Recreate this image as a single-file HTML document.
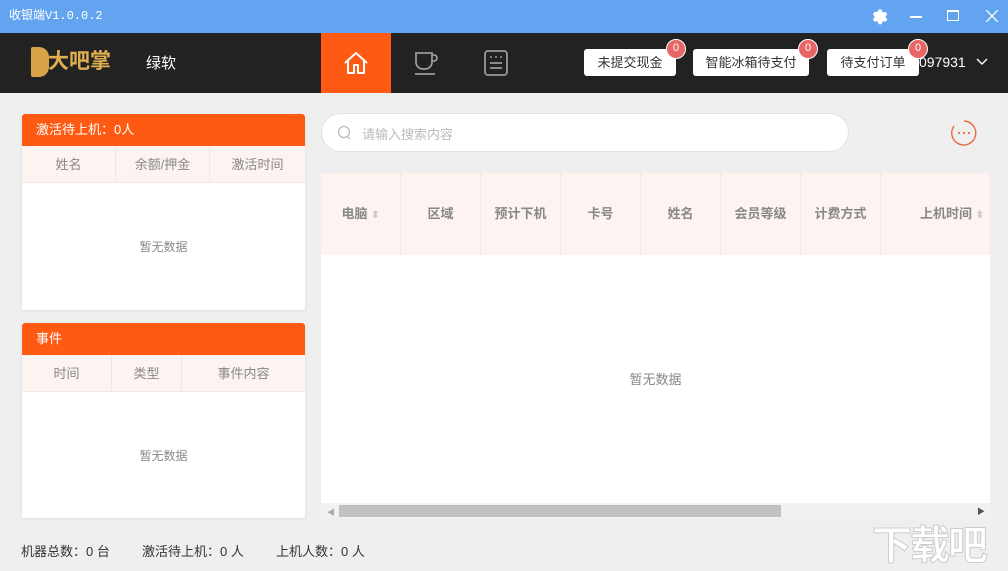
<!DOCTYPE html>
<html><head><meta charset="utf-8"><style>
*{margin:0;padding:0;box-sizing:border-box}
body{width:1008px;height:567px;overflow:hidden;background:#efefef;font-family:"Liberation Sans","Noto Sans CJK SC",sans-serif;position:relative;font-size:13px;color:#333}
.abs{position:absolute}
.title{left:0;top:0;width:1008px;height:33px;background:#62a4f0;color:#fff;font-size:12px;line-height:33px;padding-left:9px;font-family:"Liberation Mono","Noto Sans CJK SC",monospace}
.hdr{left:0;top:33px;width:1008px;height:60px;background:#222}
.btn{top:49px;height:27px;background:#fff;border-radius:3px;color:#333;font-size:13px;line-height:27px;text-align:center}
.badge{width:20px;height:20px;border-radius:10px;background:#e86565;border:1.5px solid #fff;color:#fff;font-size:11px;line-height:17px;text-align:center;top:39px}
.panel{background:#fff;box-shadow:0 1px 3px rgba(0,0,0,.08)}
.ph{background:#ff5a14;color:#fff;height:32px;line-height:32px;padding-left:14px;font-size:13px;border-radius:3px 3px 0 0}
.ch{display:flex;background:#fdf4f1;height:37px;line-height:37px;color:#888;font-size:13px;border-bottom:1px solid #f0e6e3}
.ch div{text-align:center;border-right:1px solid #f0e6e3}
.empty{color:#888;font-size:12px;text-align:center}
.th{display:flex;background:#fdf4f2;height:82px;line-height:82px;color:#888;font-size:13px;font-weight:bold}
.th div{width:80px;text-align:center;border-right:1px solid #f0e8e6}
.ft{top:541px;font-size:13px;color:#333}
</style></head><body>
<div class="abs title">收银端V1.0.0.2</div>
<svg class="abs" style="left:870px;top:7px" width="18" height="18" viewBox="0 0 24 24"><path fill="#fff" d="M12 8a4 4 0 100 8 4 4 0 000-8zm9.4 5.5l2-1.5-2-3.5-2.4.9a8 8 0 00-2-1.2L16.6 5.7h-4l-.4 2.5a8 8 0 00-2 1.2l-2.4-.9-2 3.5 2 1.5a8 8 0 000 2.3l-2 1.5 2 3.5 2.4-.9a8 8 0 002 1.2l.4 2.5h4l.4-2.5a8 8 0 002-1.2l2.4.9 2-3.5-2-1.5a8 8 0 000-2.3z" transform="translate(-2.6 -3) scale(1.1)"/></svg>
<div class="abs" style="left:910px;top:16px;width:12px;height:1.5px;background:#fff"></div>
<div class="abs" style="left:947px;top:10px;width:12px;height:11px;border:1.5px solid #fff;border-top-width:2px"></div>
<svg class="abs" style="left:986px;top:10px" width="12" height="12"><path d="M0 0L12 12M12 0L0 12" stroke="#fff" stroke-width="1.3"/></svg>
<div class="abs hdr"></div>
<div class="abs" style="left:31px;top:47px;width:18px;height:30px;background:#d9a449;border-radius:2px 10px 10px 2px"></div>
<div class="abs" style="left:48px;top:48px;color:#e0b050;font-size:21px;font-weight:bold;line-height:28px">大吧掌</div>
<div class="abs" style="left:146px;top:52px;color:#fff;font-size:15px">绿软</div>
<div class="abs" style="left:321px;top:33px;width:70px;height:60px;background:#ff5a14"></div>
<svg class="abs" style="left:343px;top:50px" width="26" height="26" viewBox="0 0 26 26"><path d="M2 13L13 3l11 10M5 11v12h6v-8h4v8h6V11" fill="none" stroke="#fff" stroke-width="2" stroke-linejoin="round"/></svg>
<svg class="abs" style="left:412px;top:49px" width="28" height="28" viewBox="0 0 28 28"><path d="M4 4h16v9a7 7 0 01-7 7h-2a7 7 0 01-7-7zM20 6h2a3 3 0 010 6h-2M3 25h20" fill="none" stroke="#999" stroke-width="1.8"/></svg>
<svg class="abs" style="left:483px;top:49px" width="26" height="28" viewBox="0 0 26 28"><rect x="2" y="2" width="22" height="24" rx="3" fill="none" stroke="#999" stroke-width="1.8"/><path d="M7 14h12M7 19h12" stroke="#999" stroke-width="1.8"/><circle cx="8" cy="8" r="1" fill="#999"/><circle cx="13" cy="8" r="1" fill="#999"/><circle cx="18" cy="8" r="1" fill="#999"/></svg>
<div class="abs btn" style="left:584px;width:92px">未提交现金</div>
<div class="abs btn" style="left:693px;width:116px">智能冰箱待支付</div>
<div class="abs btn" style="left:827px;width:92px">待支付订单</div>
<div class="abs badge" style="left:666px">0</div>
<div class="abs badge" style="left:798px">0</div>
<div class="abs badge" style="left:908px">0</div>
<div class="abs" style="left:919px;top:54px;color:#fff;font-size:14px">097931</div>
<svg class="abs" style="left:976px;top:58px" width="12" height="8"><path d="M1 1l5 5 5-5" fill="none" stroke="#fff" stroke-width="1.4"/></svg>

<div class="abs panel" style="left:22px;top:114px;width:283px;height:196px">
<div class="ph">激活待上机：0人</div>
<div class="ch"><div style="width:94px">姓名</div><div style="width:94px">余额/押金</div><div style="width:95px;border:0">激活时间</div></div>
<div class="empty" style="margin-top:55px">暂无数据</div>
</div>
<div class="abs panel" style="left:22px;top:323px;width:283px;height:195px">
<div class="ph">事件</div>
<div class="ch"><div style="width:90px">时间</div><div style="width:70px">类型</div><div style="width:123px;border:0">事件内容</div></div>
<div class="empty" style="margin-top:55px">暂无数据</div>
</div>

<div class="abs" style="left:321px;top:113px;width:528px;height:39px;background:#fff;border:1px solid #e2e2e2;border-radius:20px"></div>
<svg class="abs" style="left:337px;top:125px" width="15" height="15"><circle cx="7" cy="7" r="5.5" fill="none" stroke="#bbb" stroke-width="1.3"/><path d="M10 11l3 3" stroke="#bbb" stroke-width="1.3"/></svg>
<div class="abs" style="left:362px;top:124px;color:#bbb;font-size:13px">请输入搜索内容</div>
<svg class="abs" style="left:950px;top:119px" width="28" height="28"><path d="M14 2A12 12 0 1 1 4 7" fill="none" stroke="#e86a3a" stroke-width="1.4"/><circle cx="9" cy="14" r="1.1" fill="#e86a3a"/><circle cx="14" cy="14" r="1.1" fill="#e86a3a"/><circle cx="19" cy="14" r="1.1" fill="#e86a3a"/></svg>

<div class="abs" style="left:321px;top:173px;width:669px;height:330px;background:#fff;overflow:hidden">
<div class="th"><div>电脑 <span style="color:#ccc;font-size:10px">⬍</span></div><div>区域</div><div>预计下机</div><div>卡号</div><div>姓名</div><div>会员等级</div><div>计费方式</div><div style="width:109px;border:0;text-align:right;padding-right:6px">上机时间 <span style="color:#ccc;font-size:10px">⬍</span></div></div>
<div class="empty" style="margin-top:114px;font-size:13px">暂无数据</div>
</div>
<div class="abs" style="left:321px;top:503px;width:669px;height:15px;background:#f1f1f1"></div>
<div class="abs" style="left:339px;top:505px;width:442px;height:12px;background:#c1c1c1"></div>
<div class="abs" style="left:327px;top:507px;color:#aaa;font-size:8px">◀</div>
<div class="abs" style="left:977px;top:506px;color:#555;font-size:8px">▶</div>

<div class="abs ft" style="left:21px">机器总数：0 台</div>
<div class="abs ft" style="left:142px">激活待上机：0 人</div>
<div class="abs ft" style="left:276px">上机人数：0 人</div>
<div class="abs" style="left:872px;top:513px;color:#fff;font-size:40px;font-weight:bold;-webkit-text-stroke:1px #ccc;letter-spacing:-2px">下载吧</div>
</body></html>
